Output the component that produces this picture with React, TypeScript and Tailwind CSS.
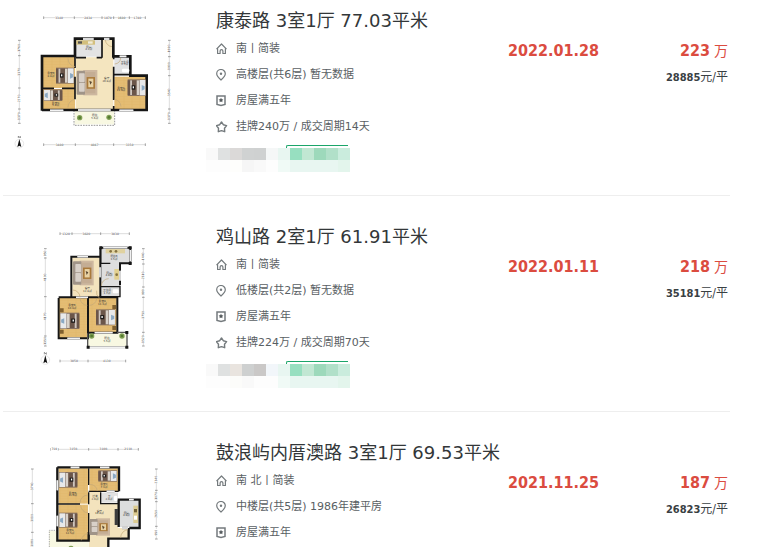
import type { ReactNode } from 'react'

type Listing = {
  title: string
  facing: string
  floor: string
  years: string
  deal: string
  date: string
  price: string
  unit: string
  plan: ReactNode
  tags: string[]
}

const WALL = '#161616'

function Wood({ x, y, w, h }: { x: number; y: number; w: number; h: number }) {
  return (
    <g>
      <rect x={x} y={y} width={w} height={h} fill="#e4bd74" />
      <rect x={x} y={y} width={w} height={h} fill="url(#planks)" />
    </g>
  )
}

function Bed({ x, y, w, h, flip }: { x: number; y: number; w: number; h: number; flip?: boolean }) {
  return (
    <g transform={flip ? `translate(${2 * x + w} 0) scale(-1 1)` : undefined}>
      <rect x={x} y={y} width={w} height={h} fill="#86705f" />
      <rect x={x} y={y + 3} width={w * 0.78} height={h - 6} fill="#6b564a" />
      <rect x={x + w * 0.14} y={y + 3} width={w * 0.1} height={h - 6} fill="#cfc6be" />
      <rect x={x + w * 0.5} y={y + 3} width={w * 0.14} height={h - 6} fill="#d9d2ca" />
      <rect x={x + w * 0.66} y={y + 2} width={w * 0.32} height={h - 4} fill="#e8e9ea" />
      <path d={`M${x + w * 0.78} ${y + h / 2 - 8}l${w * 0.16} 4v9l${-w * 0.16} 4z`} fill="#8aa9c4" />
      <rect x={x + w * 0.22} y={y + h * 0.36} width={w * 0.2} height={h * 0.26} fill="#1d1b1a" />
      <rect x={x + w * 0.28} y={y + h * 0.42} width={w * 0.07} height={h * 0.12} fill="#fff" />
    </g>
  )
}

function Sofa({ x, y, h }: { x: number; y: number; h: number }) {
  return (
    <g>
      <rect x={x + 20} y={y} width={42} height={h} fill="#cdb79f" />
      <rect x={x + 26} y={y + 6} width={30} height={h - 12} fill="#c4ad94" />
      <rect x={x} y={y + 2} width={25} height={h - 4} rx={3} fill="#a09488" />
      <rect x={x + 7} y={y + 10} width={17} height={h / 2 - 12} rx={2} fill="#d8d0c8" />
      <rect x={x + 7} y={y + h / 2} width={17} height={h / 2 - 11} rx={2} fill="#d8d0c8" />
      <rect x={x + 30} y={y + h * 0.28} width={25} height={h * 0.46} fill="#a9793a" />
      <rect x={x + 35} y={y + h * 0.34} width={15} height={h * 0.34} fill="#e9d3a4" />
      <path d={`M${x + 38} ${y + h * 0.42}l8 4-5 8z`} fill="#5a4732" />
    </g>
  )
}

function Label({ x, y, name, area }: { x: number; y: number; name: string; area: string }) {
  return (
    <text textAnchor="middle" fontSize={8} fill="#333">
      <tspan x={x} y={y}>{name}</tspan>
      <tspan x={x} y={y + 8}>{area}</tspan>
    </text>
  )
}

function RulerX({ y, stops, marks }: { y: number; stops: number[]; marks: string[] }) {
  return (
    <g>
      <path d={`M${stops[0]} ${y}H${stops[stops.length - 1]}`} stroke="#ccc" strokeWidth={2} />
      {stops.map((s) => (
        <path key={s} d={`M${s} ${y - 4}v8`} stroke="#777" strokeWidth={2} />
      ))}
      {marks.map((m, i) => {
        const mid = (stops[i] + stops[i + 1]) / 2
        return (
          <g key={i}>
            <rect x={mid - 11} y={y - 4} width={22} height={8} fill="#fff" />
            <text x={mid} y={y + 3} fontSize={9} textAnchor="middle" fill="#444">{m}</text>
          </g>
        )
      })}
    </g>
  )
}

function RulerY({ x, stops, marks }: { x: number; stops: number[]; marks: string[] }) {
  return (
    <g>
      <path d={`M${x} ${stops[0]}V${stops[stops.length - 1]}`} stroke="#ccc" strokeWidth={2} />
      {stops.map((s) => (
        <path key={s} d={`M${x - 4} ${s}h8`} stroke="#777" strokeWidth={2} />
      ))}
      {marks.map((m, i) => {
        const mid = (stops[i] + stops[i + 1]) / 2
        return (
          <g key={i} transform={`rotate(-90 ${x} ${mid})`}>
            <rect x={x - 11} y={mid - 4} width={22} height={8} fill="#fff" />
            <text x={x} y={mid + 3} fontSize={9} textAnchor="middle" fill="#444">{m}</text>
          </g>
        )
      })}
    </g>
  )
}

function Compass({ x, y }: { x: number; y: number }) {
  return (
    <g>
      <circle cx={x} cy={y} r={13} fill="none" stroke="#ddd" strokeWidth={2} />
      <path d={`M${x} ${y - 14}l6 24-6-4-6 4z`} fill="#111" />
      <path d={`M${x - 3} ${y - 17}v-6l6 6v-6`} fill="none" stroke="#666" strokeWidth={2} />
    </g>
  )
}

function Plant({ x, y }: { x: number; y: number }) {
  return (
    <g>
      <circle cx={x} cy={y} r={8} fill="#7f9f52" />
      <circle cx={x} cy={y} r={4} fill="#557a30" />
    </g>
  )
}

function Doors({ d }: { d: string }) {
  return <path d={d} fill="none" stroke="#c3a777" strokeWidth={2} />
}

function PlanFrame({ viewBox, children }: { viewBox: string; children: ReactNode }) {
  return (
    <svg viewBox={viewBox} className="block h-40 w-48" role="img">
      <defs>
        <pattern id="planks" width="24" height="8" patternUnits="userSpaceOnUse">
          <path d="M0 1h24M12 1v7" stroke="#d9a750" strokeWidth="1" opacity=".5" />
        </pattern>
      </defs>
      {children}
    </svg>
  )
}

const planKangtai = (
  <PlanFrame viewBox="9 0 576 480">
    <RulerX y={53} stops={[131, 223, 306, 341, 388, 436]} marks={['3340', '2834', '1070', '1600', '1740']} />
    <RulerX y={434} stops={[131, 226, 341, 436]} marks={['3400', '4087', '3350']} />
    <RulerY x={58} stops={[121, 167, 264, 327, 370]} marks={['1760', '3370', '2270', '1370']} />
    <RulerY x={508} stops={[121, 170, 227, 327, 370]} marks={['1690', '1900', '3540', '1370']} />
    <Wood x={129} y={168} w={96} h={96} />
    <Wood x={129} y={267} w={96} h={60} />
    <Wood x={343} y={230} w={96} h={98} />
    <rect x={227} y={118} width={78} height={52} fill="#e3e3e3" />
    <path d="M227 172h79v-54h34v210H227z" fill="#f4e5bf" />
    <rect x={343} y={170} width={48} height={53} fill="#e1e2e3" />
    <rect x={224} y={330} width={118} height={43} fill="#f8f8e2" />
    <path d="M222 331v45h122v-45" fill="none" stroke="#999" strokeWidth={3} strokeDasharray="5 3" />
    <path d="M126 332V168H225V116H340V169H391V227H440V330H126z" fill="none" stroke={WALL} strokeWidth={8} />
    <path d="M225 168v36M225 230v68M228 173h30M290 173h16M306 118v55M128 265h34M186 265h39M341 168v10M341 200v24h50M341 224v76M341 318v10" fill="none" stroke={WALL} strokeWidth={5} />
    <path d="M249 117h32M312 117h16M150 331h40M234 330h98M358 331h42M359 169h20" stroke="#b9b9b9" strokeWidth={7} />
    <path d="M249 117h32M312 117h16M150 331h40M234 330h98M358 331h42M359 169h20" stroke="#fff" strokeWidth={3} />
    <rect x={229} y={121} width={56} height={13} fill="#d3bf7c" />
    <rect x={234} y={124} width={12} height={7} fill="#555" />
    <rect x={264} y={124} width={14} height={7} fill="#f0ecd8" />
    <rect x={366} y={206} width={22} height={11} rx={4} fill="#fff" />
    <Bed x={168} y={203} w={54} h={48} />
    <Bed x={131} y={268} w={56} h={35} flip />
    <Bed x={383} y={238} w={54} h={50} />
    <Sofa x={230} y={210} h={76} />
    <Doors d="M204 176a24 24 0 0 0 21 24M204 322a24 24 0 0 1 21-24M343 298a24 24 0 0 1 20 22M316 120a22 22 0 0 0 20 20M344 192a20 20 0 0 0 18-18" />
    <Plant x={239} y={353} />
    <Plant x={327} y={352} />
    <Label x={153} y={223} name="卧室B" area="8.8㎡" />
    <Label x={167} y={311} name="卧室C" area="5.8㎡" />
    <Label x={266} y={143} name="厨房" area="4.2㎡" />
    <Label x={320} y={237} name="客厅" area="20.8㎡" />
    <Label x={374} y={188} name="卫生间" area="2.7㎡" />
    <Label x={363} y={266} name="卧室A" area="11.8㎡" />
    <Label x={284} y={348} name="阳台" area="5.6㎡" />
    <Compass x={58} y={431} />
  </PlanFrame>
)

const planJishan = (
  <PlanFrame viewBox="9 -12 576 480">
    <RulerX y={41} stops={[180, 216, 302, 388]} marks={['1320', '3020', '3030']} />
    <RulerX y={423} stops={[180, 264, 377]} marks={['3050', '4130']} />
    <RulerY x={136} stops={[86, 114, 230, 348, 378]} marks={['950', '4100', '4170', '1350']} />
    <RulerY x={430} stops={[86, 132, 201, 232, 337, 378]} marks={['1440', '2310', '990', '3750', '1520']} />
    <path d="M302 84h88v46h-30v100h-58z" fill="#dedede" />
    <rect x={217} y={112} width={84} height={120} fill="#f3e3bd" />
    <Wood x={177} y={234} w={86} h={120} />
    <Wood x={266} y={234} w={84} h={102} />
    <rect x={264} y={340} width={116} height={40} fill="#f8f8e2" />
    <path d="M214 232V110H301M176 234V355H264V232H176M266 232H352V338H266M301 83V232M301 83H391V130H360V196" fill="none" stroke={WALL} strokeWidth={6} />
    <path d="M303 130h28M303 200h57v30h-57M302 83v47" fill="none" stroke={WALL} strokeWidth={4} />
    <path d="M263 340v42h118v-45h-30" fill="none" stroke="#555" strokeWidth={4} />
    <path d="M232 110h32M310 83h72M391 90v34M202 355h38M284 338h54M300 142v30M264 382h112M360 152v30M228 232h36" stroke="#aaa" strokeWidth={6} />
    <path d="M232 110h32M310 83h72M391 90v34M202 355h38M284 338h54M300 142v30M264 382h112M360 152v30M228 232h36" stroke="#fff" strokeWidth={3} />
    <path d="M298 79h9v9h-9zM386 79h9v9h-9zM386 126h9v9h-9zM260 377h9v9h-9zM376 377h9v9h-9zM376 333h9v9h-9z" fill={WALL} />
    <rect x={317} y={87} width={58} height={13} fill="#e0d2a0" />
    <circle cx={332} cy={94} r={4} fill="#85723f" />
    <circle cx={348} cy={94} r={4} fill="#85723f" />
    <rect x={343} y={147} width={14} height={32} fill="#e2d08f" />
    <circle cx={350} cy={164} r={4} fill="#85723f" />
    <rect x={338} y={208} width={18} height={12} rx={4} fill="#fff" />
    <Sofa x={219} y={122} h={74} />
    <Bed x={180} y={278} w={58} h={49} flip />
    <Bed x={288} y={268} w={58} h={48} />
    <path d="M180 265h11v12h-11zM180 329h11v12h-11zM337 255h11v12h-11zM337 318h11v12h-11z" fill="#80602f" />
    <Doors d="M218 210a22 22 0 0 1 22 22M290 212a22 22 0 0 0 8 22M240 234a22 22 0 0 0 22 22M268 256a22 22 0 0 0 22-20M304 198a22 22 0 0 1 22-22" />
    <Plant x={275} y={348} />
    <Plant x={366} y={348} />
    <Label x={342} y={111} name="阳台B" area="3.5㎡" />
    <Label x={327} y={161} name="厨房" area="4.8㎡" />
    <Label x={262} y={207} name="客厅" area="12.8㎡" />
    <Label x={321} y={213} name="卫生间" area="1.7㎡" />
    <Label x={216} y={259} name="卧室B" area="10.9㎡" />
    <Label x={307} y={246} name="卧室A" area="11.3㎡" />
    <Label x={321} y={358} name="阳台" area="5.5㎡" />
    <Compass x={136} y={420} />
  </PlanFrame>
)

const planGulang = (
  <PlanFrame viewBox="9 -15 576 480">
    <RulerX y={37} stops={[152, 174, 266, 354, 415]} marks={['710', '3150', '3100', '2110']} />
    <RulerY x={97} stops={[96, 200, 286, 350]} marks={['3740', '3010', '3080']} />
    <RulerY x={469} stops={[96, 160, 194, 268, 306]} marks={['2340', '1070', '2650', '950']} />
    <Wood x={176} y={94} w={88} h={106} />
    <Wood x={176} y={203} w={88} h={106} />
    <Wood x={268} y={94} w={88} h={68} />
    <path d="M266 165h36v34h52v74h30v32h-58v60h-60z" fill="#f3e3bd" />
    <rect x={304} y={167} width={50} height={30} fill="#e1e1e1" />
    <rect x={358} y={190} width={60} height={80} fill="#dcdddd" />
    <path d="M147 281h28v30h90v60H147z" fill="#f8f8e2" />
    <path d="M172 280h-24v90" fill="none" stroke="#aaa" strokeWidth={3} strokeDasharray="4 3" />
    <path d="M172 91H357V163M172 91V311H266V286M356 198V188H419V273H388M356 198V270M386 273V305H325V340" fill="none" stroke={WALL} strokeWidth={7} />
    <path d="M266 94v50M266 163h90M172 201h68M266 166v36M302 166v34h54M266 200v-8M266 228v80" fill="none" stroke={WALL} strokeWidth={4} />
    <path d="M212 91h26M300 91h28M172 130v30M172 236v32M366 273h18M387 188h14M320 163h24" stroke="#aaa" strokeWidth={7} />
    <path d="M212 91h26M300 91h28M172 130v30M172 236v32M366 273h18M387 188h14M320 163h24" stroke="#fff" strokeWidth={3} />
    <rect x={344} y={216} width={10} height={48} fill="#3c3c3c" />
    <rect x={400} y={206} width={14} height={52} fill="#dccb91" />
    <rect x={402} y={216} width={9} height={10} fill="#736238" />
    <rect x={402} y={236} width={9} height={12} fill="#fff" />
    <rect x={342} y={176} width={10} height={16} rx={4} fill="#fff" />
    <Bed x={177} y={105} w={55} h={47} flip />
    <Bed x={177} y={227} w={55} h={45} flip />
    <Bed x={295} y={100} w={56} h={34} />
    <Sofa x={268} y={244} h={52} />
    <Doors d="M240 198a24 24 0 0 1 24-24M242 204a24 24 0 0 0 22 24M270 142a24 24 0 0 1 22 20M362 302a24 24 0 0 1 22-24M244 310a22 22 0 0 1 20-20" />
    <Plant x={213} y={334} />
    <Label x={218} y={170} name="卧室B" area="11.0㎡" />
    <Label x={210} y={283} name="卧室A" area="12.5㎡" />
    <Label x={312} y={144} name="卧室C" area="7.3㎡" />
    <Label x={285} y={181} name="过道" area="2.0㎡" />
    <Label x={327} y={181} name="卫" area="2.0㎡" />
    <Label x={298} y={224} name="客厅" area="16.8㎡" />
    <Label x={379} y={230} name="厨房" area="4.8㎡" />
  </PlanFrame>
)

// top row of colours first, then the bottom row
const tagsA = [
  'bg-[#f9f9f9]', 'bg-[#dfe1e1]', 'bg-[#dbd9d8]', 'bg-[#d0d2d2]', 'bg-[#cfd1d1]', 'bg-[#f5f7f7]',
  'bg-[#e8f6f1]', 'bg-[#97dfc0]', 'bg-[#c1e7d3]', 'bg-[#9dd9bb]', 'bg-[#b1e0c9]', 'bg-[#caecdd]',
  'bg-[#fdfdfd]', 'bg-[#fdfdfd]', 'bg-[#fefefc]', 'bg-[#f6f6f6]', 'bg-[#f9f9f9]', 'bg-[#fdfdfd]',
  'bg-[#f0faf6]', 'bg-[#e8f6f1]', 'bg-[#e8f6f1]', 'bg-[#e8f6f1]', 'bg-[#e8f6f1]', 'bg-[#e3f5ec]',
]

const tagsB = [
  'bg-[#f9f9f9]', 'bg-[#dfe1e1]', 'bg-[#e9e4df]', 'bg-[#ced0d0]', 'bg-[#cac8c7]', 'bg-[#f2f6fa]',
  'bg-[#e8f6f1]', 'bg-[#97dfc0]', 'bg-[#c1e7d3]', 'bg-[#9dd9bb]', 'bg-[#b1e0c9]', 'bg-[#caecdd]',
  'bg-[#fdfdfd]', 'bg-[#fdfdfd]', 'bg-[#fcfcfa]', 'bg-[#f9f9f9]', 'bg-[#fdfdfd]', 'bg-[#fdfdfd]',
  'bg-[#f0faf6]', 'bg-[#e8f6f1]', 'bg-[#e8f6f1]', 'bg-[#e8f6f1]', 'bg-[#e8f6f1]', 'bg-[#e3f5ec]',
]

const listings: Listing[] = [
  {
    title: '康泰路 3室1厅 77.03平米',
    facing: '南丨简装',
    floor: '高楼层(共6层) 暂无数据',
    years: '房屋满五年',
    deal: '挂牌240万 / 成交周期14天',
    date: '2022.01.28',
    price: '223',
    unit: '28885',
    plan: planKangtai,
    tags: tagsA,
  },
  {
    title: '鸡山路 2室1厅 61.91平米',
    facing: '南丨简装',
    floor: '低楼层(共2层) 暂无数据',
    years: '房屋满五年',
    deal: '挂牌224万 / 成交周期70天',
    date: '2022.01.11',
    price: '218',
    unit: '35181',
    plan: planJishan,
    tags: tagsB,
  },
  {
    title: '鼓浪屿内厝澳路 3室1厅 69.53平米',
    facing: '南 北丨简装',
    floor: '中楼层(共5层) 1986年建平房',
    years: '房屋满五年',
    deal: '',
    date: '2021.11.25',
    price: '187',
    unit: '26823',
    plan: planGulang,
    tags: tagsA,
  },
]

function Icon({ children }: { children: ReactNode }) {
  return (
    <svg viewBox="0 0 12 12" className="size-3 shrink-0" fill="none" stroke="#747a7d" strokeWidth="1.2" aria-hidden="true">
      {children}
    </svg>
  )
}

const HomeIcon = () => (
  <Icon>
    <path d="M.5 6.2 5.5 1l5 5.2M1.6 5.5v5h2.5V8a1.4 1.4 0 0 1 2.8 0v2.5h2.5v-5" strokeLinejoin="round" />
  </Icon>
)

const PinIcon = () => (
  <Icon>
    <path d="M5 11C2.500 8.800.7 7 .7 4.800a4.300 4.300 0 0 1 8.600 0C9.300 7 7.500 8.800 5 11z" />
    <circle cx="5" cy="4.800" r="1.200" fill="#747a7d" stroke="none" />
  </Icon>
)

const BadgeIcon = () => (
  <Icon>
    <path d="M1 1h8v8.500L5 10.500 1 9.500z" strokeWidth="1.500" />
    <path d="M5 2.800l.8 1.500 1.600.2-1.200 1.200.3 1.600L5 6.500l-1.500.8.3-1.600-1.200-1.200 1.600-.2z" fill="#555b5e" stroke="none" />
  </Icon>
)

const StarIcon = () => (
  <Icon>
    <path d="M5.500 1 7.300 3.700l3.300.9-2.100 2.700.2 3.400-3.200-1.100-3.200 1.100.2-3.400L.4 4.600l3.300-.9z" strokeLinejoin="round" strokeWidth="1.400" />
  </Icon>
)

function Info({ icon, children }: { icon: ReactNode; children: ReactNode }) {
  return (
    <p className="flex h-[26px] items-center gap-2 text-[11px] text-[#596063]">
      {icon}
      <span className="whitespace-pre">{children}</span>
    </p>
  )
}

function Tags({ colors }: { colors: string[] }) {
  return (
    <div className="-ml-2.5 mt-[5px] w-36">
      <div className="ml-20 mr-0.5 h-[3px] rounded-tl-xs border-l border-t border-[#1ba569]" />
      <div className="grid grid-cols-12">
        {colors.map((c, i) => (
          <span key={i} className={`h-3 ${c}`} />
        ))}
      </div>
    </div>
  )
}

function ListingRow({ item }: { item: Listing }) {
  return (
    <li className="flex border-b border-[#eeeeee] pb-[23px] pr-0.5 pt-[29px]">
      <a href="#" className="-mt-[9px] w-[213px] shrink-0">
        {item.plan}
      </a>
      <div className="min-w-0 flex-1">
        <h2 className="mb-[3px] whitespace-nowrap text-lg leading-6 text-[#333739]">
          <a href="#">{item.title}</a>
        </h2>
        <Info icon={<HomeIcon />}>{item.facing}</Info>
        <Info icon={<PinIcon />}>{item.floor}</Info>
        <Info icon={<BadgeIcon />}>{item.years}</Info>
        <Info icon={<StarIcon />}>{item.deal}</Info>
        <Tags colors={item.tags} />
      </div>
      <div className="flex w-[220px] shrink-0 justify-between pt-[29px] font-['DejaVu_Sans_Condensed','Noto_Sans_CJK_SC',sans-serif]">
        <p className="text-base font-bold leading-[26px] text-[#db4c3f]">{item.date}</p>
        <div className="text-right">
          <p className="text-sm leading-[26px] text-[#db4c3f]">
            <strong className="text-base leading-[26px]">{item.price}</strong> 万
          </p>
          <p className="text-xs leading-[26px] text-[#394043]">
            <strong className="text-[11px]">{item.unit}</strong>元/平
          </p>
        </div>
      </div>
    </li>
  )
}

export default function App() {
  return (
    <main className="h-screen overflow-hidden bg-white pl-[3px] pr-[45px] font-['DejaVu_Sans','Noto_Sans_CJK_SC',sans-serif]">
      <ul className="-mt-5">
        {listings.map((item) => (
          <ListingRow key={item.title} item={item} />
        ))}
      </ul>
    </main>
  )
}
